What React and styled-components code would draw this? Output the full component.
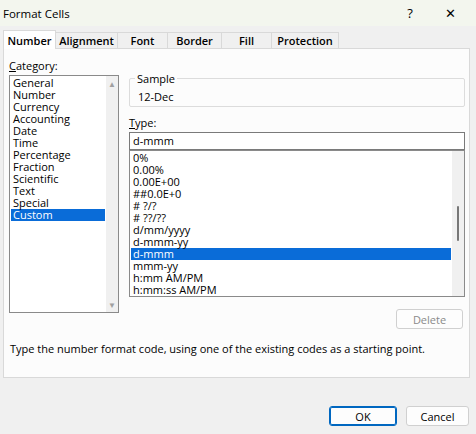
import React from "react";
import styled, { createGlobalStyle } from "styled-components";

const G = createGlobalStyle`
  html,body{margin:0;padding:0;background:#f0f0f0;}
  body{font-family:"Segoe UI","Open Sans","Liberation Sans",sans-serif;font-size:11px;color:#000;}
`;
const Win = styled.div`width:476px;height:434px;display:flex;flex-direction:column;background:#f0f0f0;overflow:hidden;`;
const Title = styled.div`height:26px;flex:none;display:flex;align-items:center;padding:0 6px 0 3px;background:#f3f6ee;font-size:11.5px;`;
const TitleText = styled.div`flex:1;`;
const TBtn = styled.div`width:40px;text-align:center;font-size:13px;`;
const Tabs = styled.div`display:flex;padding:6px 0 0 4px;height:16px;`;
const Tab = styled.div`width:${p=>p.$w}px;text-align:center;height:16px;line-height:16px;border:1px solid #d9d9d9;border-bottom:none;margin-left:-1px;background:${p=>p.$active?"#fff":"#f0f0f0"};font-weight:600;${p=>p.$active&&"height:18px;margin-top:-2px;line-height:20px;position:relative;z-index:1;"}`;
const Panel = styled.div`margin:0 6px 0 3px;height:330px;border:1px solid #d9d9d9;background:#fcfcfc;display:flex;flex-direction:column;padding:10px 4px 0 5px;box-sizing:border-box;`;
const Cols = styled.div`display:flex;gap:10px;`;
const Left = styled.div`width:110px;display:flex;flex-direction:column;`;
const Label = styled.div`height:13px;line-height:13px;margin-bottom:3px;margin-top:${p=>p.$mt||0}px;`;
const List = styled.div`border:1px solid #8a8a8a;background:#fff;display:flex;height:${p=>p.$h}px;box-sizing:border-box;`;
const Items = styled.div`flex:1;padding:1px 1px;`;
const Item = styled.div`height:12px;line-height:12px;padding-left:2px;${p=>p.$sel&&"background:#0a6cd8;color:#fff;"}`;
const Scroll = styled.div`width:12px;background:#f0f0f0;display:flex;flex-direction:column;justify-content:space-between;align-items:center;color:#a0a0a0;font-size:8px;padding:2px 0;position:relative;`;
const Thumb = styled.div`position:absolute;left:5px;top:${p=>p.$t}px;width:2px;height:35px;background:#777;border-radius:1px;`;
const Right = styled.div`flex:1;display:flex;flex-direction:column;padding-top:12px;`;
const Group = styled.fieldset`margin:0;border:1px solid #dcdcdc;border-radius:2px;padding:3px 8px 5px;height:36px;box-sizing:border-box;`;
const Legend = styled.legend`padding:0 2px;margin-left:-3px;`;
const Input = styled.div`height:18px;border:1px solid #7a7a7a;background:#fff;line-height:16px;padding-left:3px;box-sizing:border-box;`;
const Row = styled.div`display:flex;justify-content:flex-end;padding:12px 2px 0;`;
const Btn = styled.div`width:${p=>p.$w}px;height:20px;box-sizing:border-box;border:1px solid ${p=>p.$def?"#0067c0":"#d0d0d0"};${p=>p.$def&&"box-shadow:inset 0 0 0 1px #0067c0;"}border-radius:3px;background:#fdfdfd;display:flex;align-items:center;justify-content:center;color:${p=>p.$dis?"#8a8a8a":"#000"};`;
const Desc = styled.div`margin-top:12px;padding-left:1px;`;
const Footer = styled.div`display:flex;justify-content:flex-end;gap:9px;padding:28px 7px 0 0;`;

const cats=["General","Number","Currency","Accounting","Date","Time","Percentage","Fraction","Scientific","Text","Special","Custom"];
const types=["0%","0.00%","0.00E+00","##0.0E+0","# ?/?","# ??/??","d/mm/yyyy","d-mmm-yy","d-mmm","mmm-yy","h:mm AM/PM","h:mm:ss AM/PM"];

export default function App(){
  return <Win><G/>
    <Title><TitleText>Format Cells</TitleText><TBtn>?</TBtn><TBtn>✕</TBtn></Title>
    <Tabs>
      <Tab $active $w={51}>Number</Tab><Tab $w={61}>Alignment</Tab><Tab $w={49}>Font</Tab><Tab $w={53}>Border</Tab><Tab $w={49}>Fill</Tab><Tab $w={66}>Protection</Tab>
    </Tabs>
    <Panel>
      <Cols>
        <Left>
          <Label><u>C</u>ategory:</Label>
          <List $h={238}>
            <Items>{cats.map(c=><Item key={c} $sel={c==="Custom"}>{c}</Item>)}</Items>
            <Scroll><span>▲</span><span>▼</span></Scroll>
          </List>
        </Left>
        <Right>
          <Group><Legend>Sample</Legend>12-Dec</Group>
          <Label $mt={9}><u>T</u>ype:</Label>
          <Input>d-mmm</Input>
          <List $h={147}>
            <Items>{types.map(c=><Item key={c} $sel={c==="d-mmm"}>{c}</Item>)}</Items>
            <Scroll><Thumb $t={55}/></Scroll>
          </List>
          <Row><Btn $w={67} $dis>Delete</Btn></Row>
        </Right>
      </Cols>
      <Desc>Type the number format code, using one of the existing codes as a starting point.</Desc>
    </Panel>
    <Footer><Btn $w={68} $def>OK</Btn><Btn $w={63}>Cancel</Btn></Footer>
  </Win>;
}
